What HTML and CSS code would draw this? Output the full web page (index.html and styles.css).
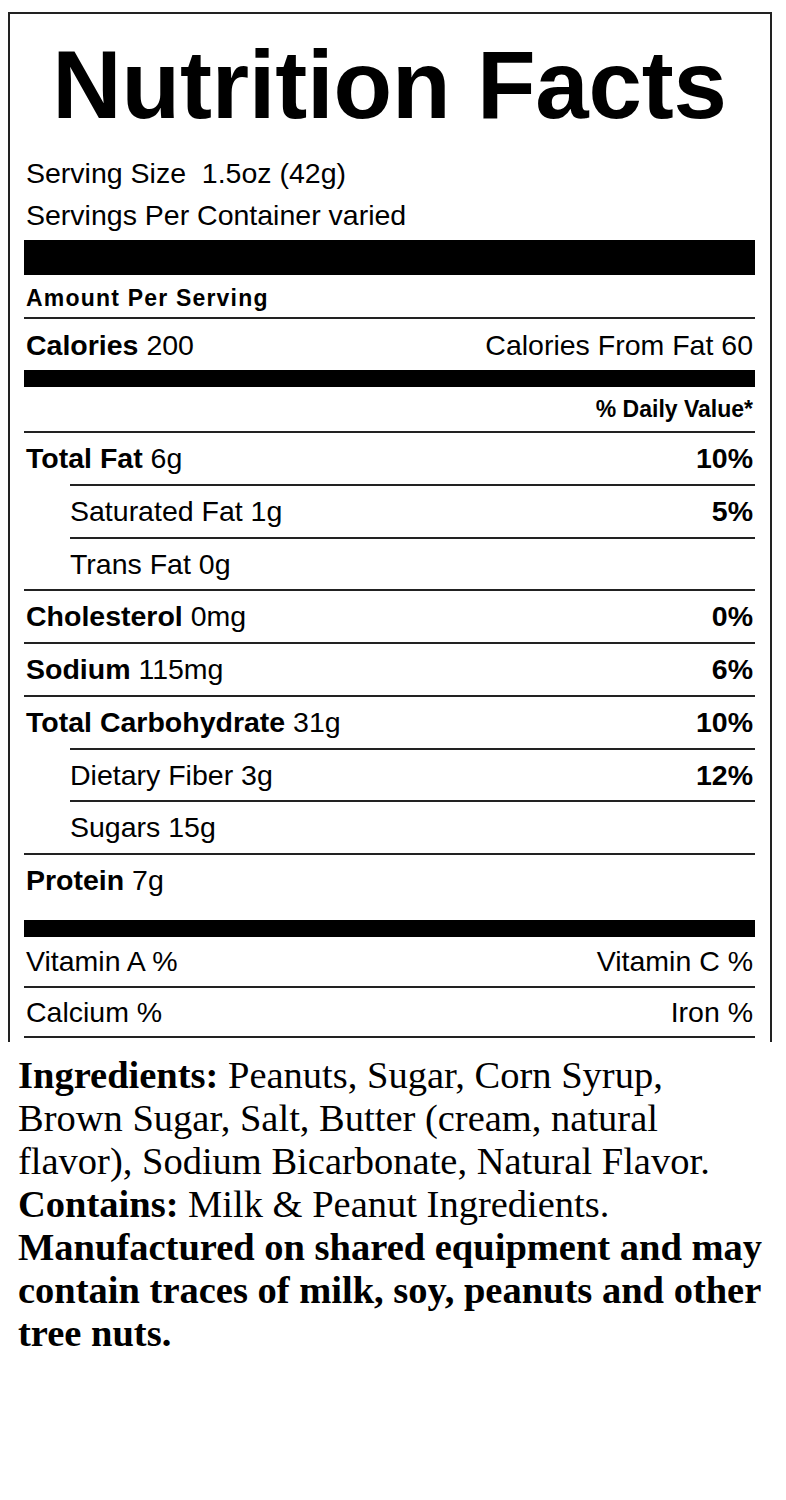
FILE: index.html
```html
<!DOCTYPE html>
<html lang="en">
<head>
<meta charset="utf-8">
<title>Nutrition Facts</title>
<link rel="stylesheet" href="styles.css">
</head>
<body>
<section class="label">
  <h1 class="title">Nutrition Facts</h1>
  <div class="serving">
    <div class="serving-line">Serving Size&nbsp; 1.5oz (42g)</div>
    <div class="serving-line">Servings Per Container varied</div>
  </div>
  <div class="bar bar-thick"></div>
  <div class="row row-small"><span class="small-bold spaced">Amount Per Serving</span></div>
  <div class="row row-cal ruled"><span><b>Calories</b> 200</span><span>Calories From Fat 60</span></div>
  <div class="bar bar-med"></div>
  <div class="row row-dv"><span></span><span class="small-bold">% Daily Value*</span></div>
  <div class="row nutrient ruled"><span><b>Total Fat</b> 6g</span><b>10%</b></div>
  <div class="row nutrient ruled indent"><span>Saturated Fat 1g</span><b>5%</b></div>
  <div class="row nutrient ruled indent"><span>Trans Fat 0g</span></div>
  <div class="row nutrient ruled"><span><b>Cholesterol</b> 0mg</span><b>0%</b></div>
  <div class="row nutrient ruled"><span><b>Sodium</b> 115mg</span><b>6%</b></div>
  <div class="row nutrient ruled"><span><b>Total Carbohydrate</b> 31g</span><b>10%</b></div>
  <div class="row nutrient ruled indent"><span>Dietary Fiber 3g</span><b>12%</b></div>
  <div class="row nutrient ruled indent"><span>Sugars 15g</span></div>
  <div class="row nutrient ruled protein"><span><b>Protein</b> 7g</span></div>
  <div class="bar bar-med"></div>
  <div class="row row-vit"><span>Vitamin A %</span><span>Vitamin C %</span></div>
  <div class="row row-min ruled last"><span>Calcium %</span><span>Iron %</span></div>
</section>
<section class="ingredients">
  <p><b>Ingredients:</b> Peanuts, Sugar, Corn Syrup, Brown Sugar, Salt, Butter (cream, natural flavor), Sodium Bicarbonate, Natural Flavor.</p>
  <p><b>Contains:</b> Milk &amp; Peanut Ingredients.</p>
  <p class="warning">Manufactured on shared equipment and may contain traces of milk, soy, peanuts and other tree nuts.</p>
</section>
</body>
</html>
```
FILE: styles.css
```css
html, body {
  background: #fff;
}
body {
  margin: 8px;
  color: #000;
  font-family: "Liberation Sans", Arial, sans-serif;
}
.label {
  width: 764px;
  box-sizing: border-box;
  margin-top: 4px;
  border: 2px solid #222;
  border-bottom: none;
  padding: 0 15px 4px 14px;
}
.title {
  margin: 23px 0 19px;
  font-size: 96px;
  line-height: 96px;
  font-weight: bold;
  text-align: center;
  letter-spacing: -0.2px;
}
.serving {
  margin-bottom: 4px;
  font-size: 28.5px;
  line-height: 42px;
  padding-left: 2px;
}
.bar {
  background: #000;
}
.bar-thick {
  height: 35px;
}
.bar-med {
  height: 17px;
}
.row {
  display: flex;
  justify-content: space-between;
  align-items: center;
  padding: 0 2px;
  font-size: 28.5px;
  white-space: nowrap;
}
.ruled {
  border-top: 2px solid #222;
}
.row-small {
  padding-top: 4px;
  line-height: 38px;
}
.small-bold {
  font-size: 23px;
  font-weight: bold;
}
.spaced {
  letter-spacing: 1.2px;
}
.row-cal {
  padding-top: 2px;
  line-height: 49px;
}
.row-dv {
  line-height: 44px;
}
.nutrient {
  line-height: 50.75px;
}
.indent {
  margin-left: 46px;
  padding-left: 0;
}
.protein {
  line-height: 51px;
  margin-bottom: 14px;
}
.row-vit {
  line-height: 49px;
}
.row-min {
  line-height: 48px;
}
.last {
  border-bottom: 2px solid #222;
}
.ingredients {
  width: 752px;
  margin: 12px 0 0 10px;
  font-family: "Liberation Serif", "Times New Roman", serif;
  font-size: 38.5px;
  line-height: 43px;
}
.ingredients p {
  margin: 0;
}
.warning {
  font-weight: bold;
}
```
